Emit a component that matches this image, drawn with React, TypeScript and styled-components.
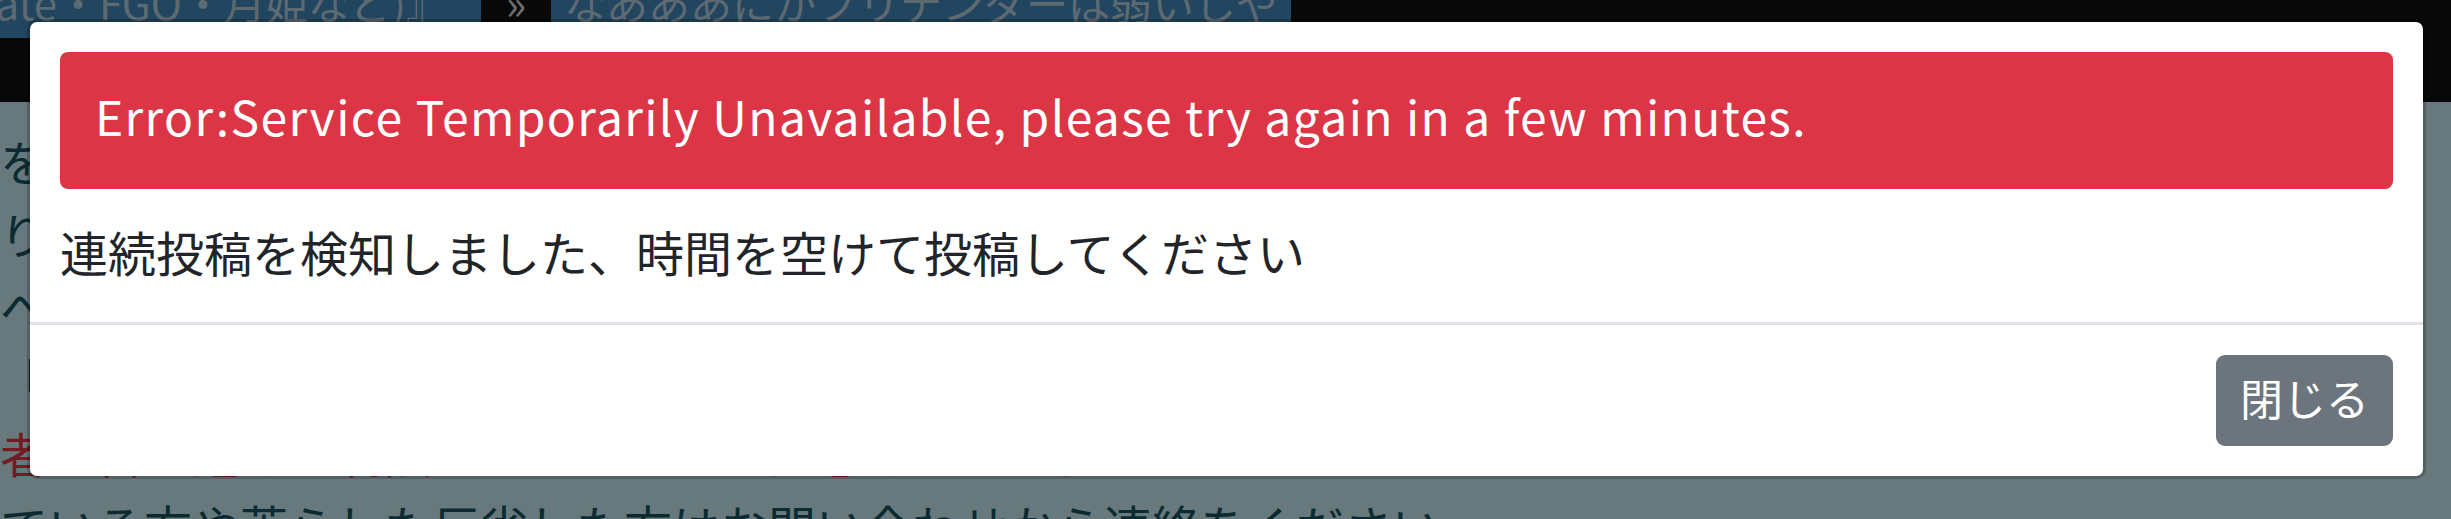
import React from "react";
import styled, { createGlobalStyle } from "styled-components";

const GlobalStyle = createGlobalStyle`
  html, body {
    margin: 0;
    padding: 0;
  }
  body {
    width: 2451px;
    height: 519px;
    overflow: hidden;
    background: #67797c;
    font-family: "Noto Sans CJK JP", "Noto Sans", sans-serif;
  }
  * { box-sizing: border-box; }
`;

const Page = styled.div`
  position: relative;
  width: 2451px;
  height: 519px;
  overflow: hidden;
  background: #67797c;
`;

const Header = styled.header`
  height: 102px;
  background: #080808;
  overflow: hidden;
`;

const Crumbs = styled.nav`
  display: flex;
  margin-top: -34px;
  font-size: 42px;
  line-height: 72px;
  white-space: nowrap;
`;

const Crumb = styled.div<{
  $width?: number;
  $tone: "blue" | "dark";
  $align: "flex-start" | "center" | "flex-end";
  $padRight?: number;
}>`
  display: flex;
  flex: none;
  justify-content: ${(p) => p.$align};
  width: ${(p) => (p.$width ? `${p.$width}px` : "auto")};
  padding: 0 ${(p) => p.$padRight ?? 13}px 0 13px;
  overflow: hidden;
  background: ${(p) => (p.$tone === "blue" ? "#224560" : "#080808")};
  color: ${(p) => (p.$tone === "blue" ? "#5d6a71" : "#6d6d6d")};
`;

const Content = styled.main`
  padding-top: 22px;
  font-size: 48px;
  line-height: 73px;
  color: #0c2b31;
`;

const Line = styled.p<{ $tone?: "dark" | "red" }>`
  margin: 0;
  white-space: nowrap;
  color: ${(p) => (p.$tone === "red" ? "#761a23" : "#0c2b31")};
`;

const Overlay = styled.div`
  position: absolute;
  inset: 0;
  display: flex;
  align-items: flex-start;
  padding: 19px 25px 0 27px;
`;

const Dialog = styled.div`
  flex: 1;
  display: flex;
  flex-direction: column;
  background: #ffffff;
  background-clip: padding-box;
  border: 3px solid rgba(0, 0, 0, 0.2);
  border-radius: 10px;
  font-family: "Noto Sans CJK JP", "Noto Sans", sans-serif;
`;

const Body = styled.div`
  padding: 30px 30px 35px 30px;
`;

const Alert = styled.div`
  margin-bottom: 26px;
  padding: 27px 35px 38px;
  background: #dc3545;
  border-radius: 8px;
  color: #ffffff;
  font-size: 48px;
  line-height: 72px;
  letter-spacing: 1.35px;
  white-space: nowrap;
`;

const Message = styled.p`
  margin: 0;
  color: #212529;
  font-size: 48px;
  line-height: 72px;
  white-space: nowrap;
`;

const Footer = styled.div`
  display: flex;
  justify-content: flex-end;
  padding: 30px;
  border-top: 3px solid #dee2e6;
`;

const CloseButton = styled.button`
  height: 91px;
  padding: 6px 24px 13px;
  border: none;
  border-radius: 9px;
  background: #6c757d;
  color: #ffffff;
  font-family: "Noto Sans CJK JP", "Noto Sans", sans-serif;
  font-size: 43px;
  line-height: 72px;
  cursor: pointer;
`;

const lines: { text: string; tone?: "dark" | "red" }[] = [
  { text: "をお楽しみいただくための掲示板です。" },
  { text: "りとりを行う場合は、マナーを守って投稿してください。" },
  { text: "への誹謗中傷や、荒らし行為は禁止しています。" },
  { text: "『型月関連スレ』はこちらから投稿してください。" },
  { text: "者は書き込みが制限されますのでご注意ください。", tone: "red" },
  { text: "ている方や荒らした反省した方はお問い合わせから連絡をください" },
];

export default function App() {
  return (
    <>
      <GlobalStyle />
      <Page>
        <Header>
          <Crumbs>
            <Crumb $width={481} $tone="blue" $align="flex-end" $padRight={33}>
              『Fate・FGO・月姫など)』
            </Crumb>
            <Crumb $width={70} $tone="dark" $align="center">
              »
            </Crumb>
            <Crumb $tone="blue" $align="flex-start">
              なあああにかフリテンダーは弱いしや
            </Crumb>
          </Crumbs>
        </Header>
        <Content>
          {lines.map((l, i) => (
            <Line key={i} $tone={l.tone}>
              {l.text}
            </Line>
          ))}
        </Content>
        <Overlay>
          <Dialog role="dialog">
            <Body>
              <Alert>Error:Service Temporarily Unavailable, please try again in a few minutes.</Alert>
              <Message>連続投稿を検知しました、時間を空けて投稿してください</Message>
            </Body>
            <Footer>
              <CloseButton>閉じる</CloseButton>
            </Footer>
          </Dialog>
        </Overlay>
      </Page>
    </>
  );
}
